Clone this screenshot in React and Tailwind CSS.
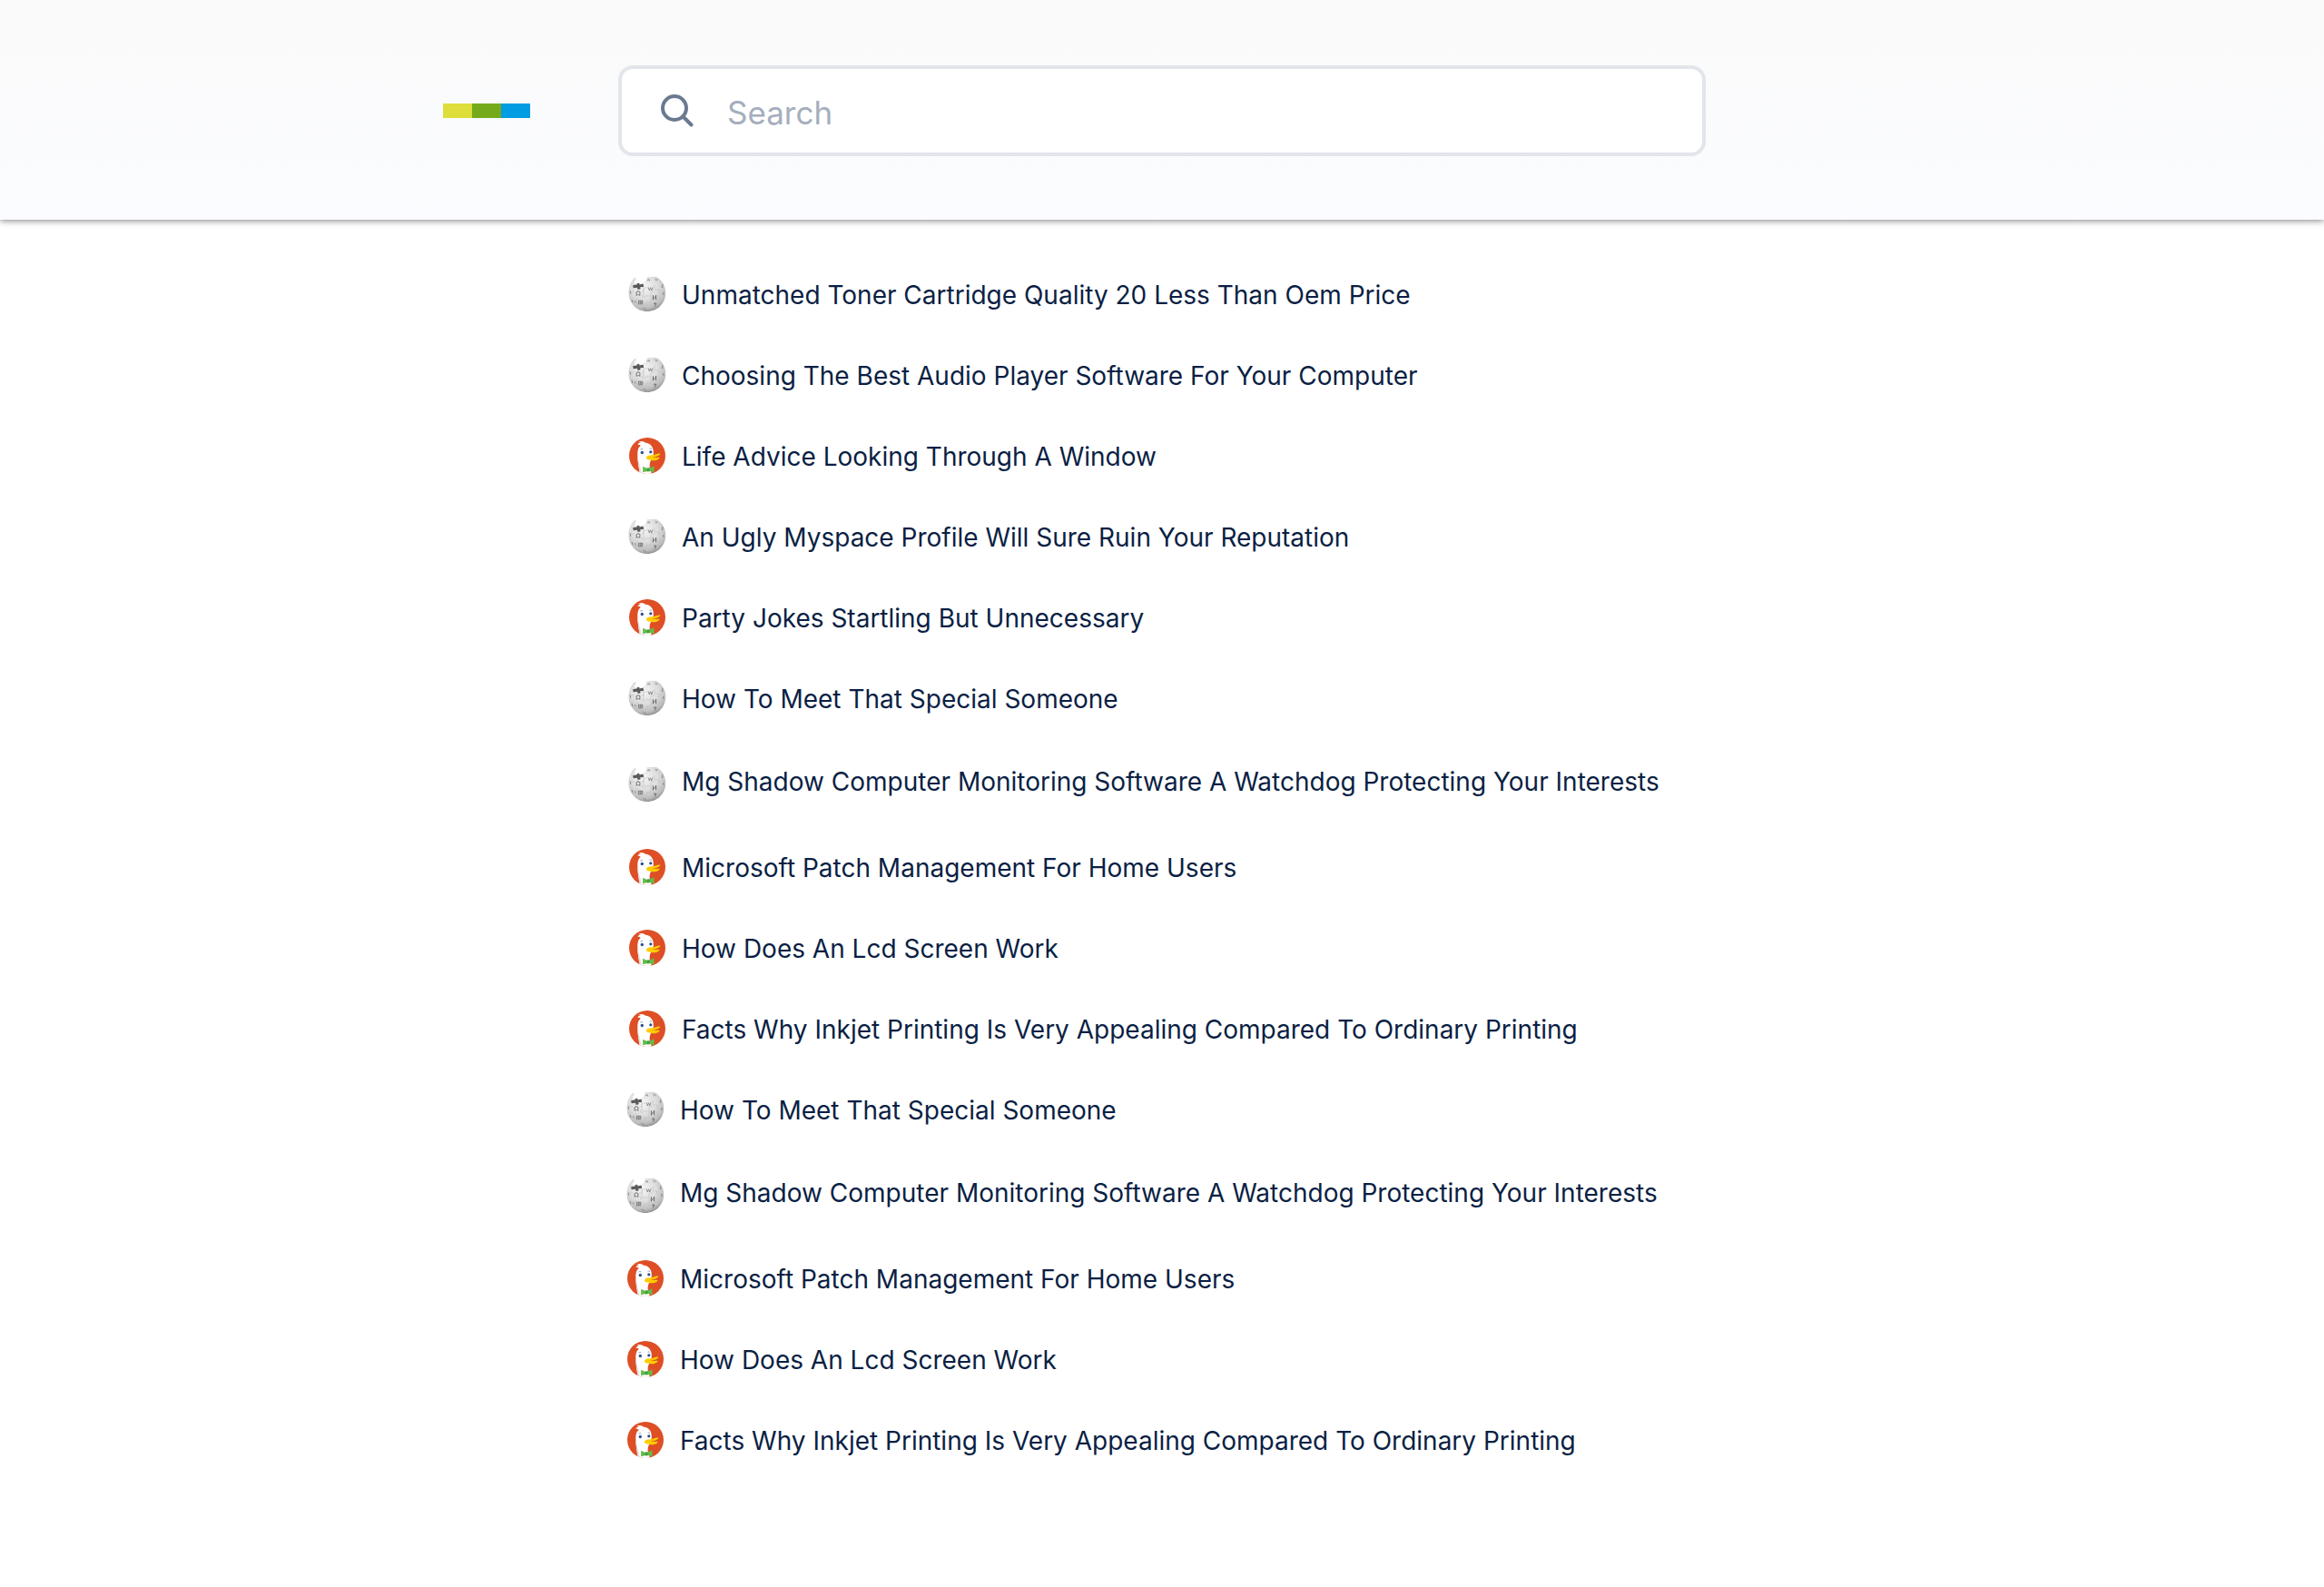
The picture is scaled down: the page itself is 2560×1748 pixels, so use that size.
const WIKI = "wiki";
const DUCK = "duck";

const groups = [
  [
    { icon: WIKI, title: "Unmatched Toner Cartridge Quality 20 Less Than Oem Price" },
    { icon: WIKI, title: "Choosing The Best Audio Player Software For Your Computer" },
    { icon: DUCK, title: "Life Advice Looking Through A Window" },
    { icon: WIKI, title: "An Ugly Myspace Profile Will Sure Ruin Your Reputation" },
    { icon: DUCK, title: "Party Jokes Startling But Unnecessary" },
    { icon: WIKI, title: "How To Meet That Special Someone" },
    { icon: WIKI, tall: true, title: "Mg Shadow Computer Monitoring Software A Watchdog Protecting Your Interests" },
    { icon: DUCK, title: "Microsoft Patch Management For Home Users" },
    { icon: DUCK, title: "How Does An Lcd Screen Work" },
    { icon: DUCK, title: "Facts Why Inkjet Printing Is Very Appealing Compared To Ordinary Printing" },
  ],
  [
    { icon: WIKI, title: "How To Meet That Special Someone" },
    { icon: WIKI, tall: true, title: "Mg Shadow Computer Monitoring Software A Watchdog Protecting Your Interests" },
    { icon: DUCK, title: "Microsoft Patch Management For Home Users" },
    { icon: DUCK, title: "How Does An Lcd Screen Work" },
    { icon: DUCK, title: "Facts Why Inkjet Printing Is Very Appealing Compared To Ordinary Printing" },
  ],
];

function GlobeIcon() {
  return (
    <svg className="h-10 w-11 shrink-0" viewBox="11 14 44 40" aria-hidden="true">
      <defs>
        <radialGradient id="globe" cx="0.42" cy="0.3" r="0.72">
          <stop offset="0" stopColor="#f4f4f4" />
          <stop offset="0.5" stopColor="#dedede" />
          <stop offset="0.85" stopColor="#bcbcbc" />
          <stop offset="1" stopColor="#8c8c8c" />
        </radialGradient>
      </defs>
      <path
        fill="url(#globe)"
        d="M19.5 15.5 Q21.5 17 20 19 Q18 20.5 19.5 22.5 L28 23.5 L30 20 Q31.5 20.5 32.3 19 Q31 17 33 15 L42.5 14.8 C49 18 53.2 24.5 53.2 32.5 C53.2 44 44.3 53 32.9 53 C21.5 53 12.5 44 12.5 32.5 C12.5 25.5 15 19.3 19.5 15.5 Z"
      />
      <path
        fill="#5a5a5a"
        d="M17 24.2 L21.5 23.4 Q21.3 21.4 23.5 21.8 Q25.2 22.2 24.3 23.5 L28.5 22.4 L29.2 26 L25 26.3 Q26.5 28.4 24 28.8 Q21 28.8 22.3 26.7 L17.7 27.2 Z"
      />
      <g fill="none" stroke="#b8b8b8" strokeWidth="0.5">
        <path d="M14 31 H19 M26 31 H29 V27 H33 M29 27 V35 Q27 34.5 27.5 37 Q30 39 30 36 H37 V31 H41 M37 36 V43 H32 V47 M41 24 V29 H46 V33 M22 38 V46 H29 M45 37 Q48 38 47 41" />
      </g>
      <g fill="none" stroke="#5c5c5c" strokeWidth="0.9">
        <path d="M20.5 35 H22.3 Q20.6 33.5 21 32 Q21.5 30.8 23 30.8 Q24.6 30.8 25 32 Q25.3 33.5 23.7 35 H25.5" />
        <path d="M39.4 35.2 V40.4 M42.6 35 V40.2 M39.4 39.5 L42.4 36.2" />
        <path d="M40 44.2 H42.8 L41.2 47.4" />
        <g strokeWidth="0.6">
          <path d="M34 26.3 L35.3 30 L36.5 26.8 L37.8 30 L39 26.3" />
          <path d="M23.5 40.8 V45 M23.3 41.3 H28 M23.3 43 H28 M23.3 44.8 H28 M25.8 40.8 V45 M27.8 41 V44.5" />
          <path d="M14 30.5 L14.8 34 M49.8 23 V26.5 L48.5 26 M50.5 32 L51 35 M16 40 L17 43 M19.5 41 L20 43.5" />
          <path opacity="0.7" d="M28 49 L32 50.5 M32 19 L36 18 M34 17 L36 20 M41 17 L44 19 M42 19.5 L44.5 17" />
        </g>
      </g>
    </svg>
  );
}

function DuckIcon() {
  return (
    <svg className="h-10 w-11 shrink-0" viewBox="10.2 12 44 40" aria-hidden="true">
      <defs>
        <clipPath id="disc">
          <circle cx="32.2" cy="32" r="20" />
        </clipPath>
      </defs>
      <circle cx="32.2" cy="32" r="20" fill="#de4f26" />
      <g clipPath="url(#disc)">
        <path
          fill="#fff"
          d="M24.5 53 C23 46 21.5 39 21.5 31 C21.5 26.5 22 23 25 21 C24 20 22.6 19.6 21.5 20 C22.2 18.4 23.5 17.5 25 17.3 C24.2 16.6 23.4 16.5 22.6 16.7 C25.5 15.3 28.5 16 30.3 17.8 C36 18.3 39 22.5 39 28 C39 31.5 38.4 34 36.5 36.8 C34.8 39.5 34.4 42 35.2 46 L37.5 53 Z"
        />
        <path fill="#e2e2e2" d="M24.5 53 C23 46 21.5 39 21.5 31 C23 38 25 46 26.5 53 Z" />
        <path
          fill="#fc0"
          d="M31.3 33.7 C32.2 31.3 35.5 31.4 39.5 31 C42.5 30.5 44.3 28.9 46.3 29.7 C47.4 30.7 42.6 33.3 38.2 33.8 C40.8 34.6 44.6 33 45.6 34 C46.3 35.4 42.3 37.8 38 37.2 C34.4 36.8 30.4 36.2 31.3 33.7 Z"
        />
        <path fill="#65bc46" d="M27.3 43.8 L32 46 L34.5 45.8 L39.7 43.2 V50.4 L34.7 48.7 L32 49 L27.3 50.2 Z" />
        <path fill="#43a244" d="M31.6 45.4 L34.9 45.2 V49.2 L31.8 49.5 Z" />
      </g>
      <circle cx="26.5" cy="28.5" r="1.7" fill="#2d4f8e" />
      <circle cx="36" cy="27.8" r="1.6" fill="#2d4f8e" />
      <path fill="none" stroke="#5579b8" strokeWidth="0.7" d="M24.5 25.2 Q25.8 24 27.3 24.8 M34.7 24.3 Q36 23.5 37.2 24.4" />
    </svg>
  );
}

function Logo() {
  return (
    <a href="#home" aria-label="Home" className="flex h-4 w-24">
      <span className="flex-1 bg-[#dede3a]" />
      <span className="flex-1 bg-[#75ab1b]" />
      <span className="flex-1 bg-[#009de3]" />
    </a>
  );
}

function ResultRow({ icon, title, tall }) {
  return (
    <li className={tall ? "h-[97px]" : "h-[89px]"}>
      <a href="#result" className="flex items-start gap-4 text-[#0b1f44]">
        <span className={tall ? "pt-[30px]" : "pt-6"}>
          {icon === WIKI ? <GlobeIcon /> : <DuckIcon />}
        </span>
        <span className={`text-[28px] leading-[42px] whitespace-nowrap ${tall ? "pt-[26px]" : "pt-6"}`}>{title}</span>
      </a>
    </li>
  );
}

export default function App() {
  return (
    <div className="min-h-screen bg-white font-['Inter',sans-serif]">
      <header className="grid grid-cols-[1fr_minmax(0,1198px)_1fr] items-center bg-linear-to-b from-[#fafafa] to-[#fbfcff] pt-[72px] pb-[70px] shadow-[0_1px_7px_rgba(0,0,0,0.5)]">
        <div className="flex justify-end pr-[97px]">
          <Logo />
        </div>
        <label className="flex h-[100px] items-center gap-9 rounded-2xl border-4 border-[#e2e5ea] bg-white pr-10 pl-10">
          <svg className="h-10 w-10 shrink-0" viewBox="0 0 40 40" fill="none" stroke="#6b7a90" strokeWidth="4" strokeLinecap="round" aria-hidden="true">
            <circle cx="18" cy="17" r="13" />
            <path d="M27.5 26.5 L36.5 35.5" />
          </svg>
          <input
            type="search"
            aria-label="Search"
            placeholder="Search"
            className="min-w-0 flex-1 bg-transparent pt-1 text-[35px] leading-10 text-[#0b1f44] outline-none placeholder:text-[#a5aebd]"
          />
        </label>
      </header>
      <main className="mx-auto max-w-[1198px] pt-[38px]">
        <ul className="pl-[10px]">
          {groups[0].map((row) => (
            <ResultRow key={row.title} {...row} />
          ))}
        </ul>
        <ul className="pl-2">
          {groups[1].map((row) => (
            <ResultRow key={row.title} {...row} />
          ))}
        </ul>
      </main>
    </div>
  );
}
